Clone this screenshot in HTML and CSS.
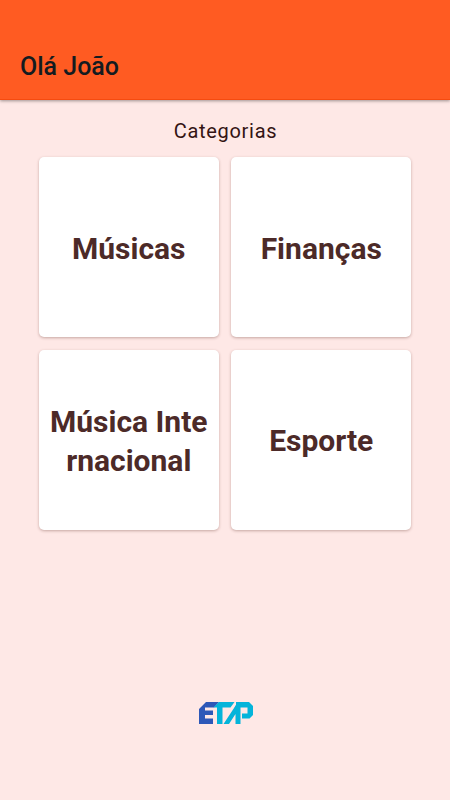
FILE: index.html
```html
<!DOCTYPE html>
<html lang="pt-BR">
<head>
<meta charset="utf-8">
<title>Categorias</title>
<link rel="stylesheet" href="styles.css">
</head>
<body>
<header class="app-bar"><h1 class="greeting">Olá João</h1></header>
<main class="content">
<h2 class="section-title">Categorias</h2>
<div class="grid">
<button class="card">Músicas</button>
<button class="card">Finanças</button>
<button class="card">Música Inte<br>rnacional</button>
<button class="card">Esporte</button>
</div>
</main>
<footer class="footer">
<svg class="logo" viewBox="0 0 54 22" role="img" aria-label="ETAP">
<path fill="#2d58b8" d="M0 7L7 0H20L15 5.500H6V8.500H14V13H6V16.500H14V22H0Z"/>
<path fill="#04b4da" d="M20 0H35.500L31.500 5.500H23.500V22H18V5.500H14.500Z"/>
<path fill="#04b4da" d="M24.500 22L37 3V0H41.500V22H36.500V12L30 22Z"/>
<path fill="#04b4da" d="M39 0H50L54 4V13L50.500 16.500H43V11.500H48.500V5.500H35.500Z"/>
</svg>
</footer>
</body>
</html>
```

FILE: styles.css
```css
* { box-sizing: border-box; }
body {
  margin: 0;
  height: 800px;
  display: flex;
  flex-direction: column;
  background: #fee8e6;
  font-family: Roboto, sans-serif;
  overflow: hidden;
}
.app-bar {
  height: 100px;
  flex: none;
  padding: 52px 20px 0;
  background: #ff5b22;
  border-bottom: 1px solid #f54b10;
  box-shadow: 0 1px 3px rgba(0, 0, 0, .38);
}
.greeting {
  margin: 0;
  font-size: 25px;
  line-height: 30px;
  font-weight: 500;
  color: #141b20;
}
.content { padding-top: 19px; }
.section-title {
  margin: 0 0 14.400px;
  padding-left: 1px;
  text-align: center;
  font-size: 20px;
  line-height: 24px;
  font-weight: 400;
  letter-spacing: .7px;
  color: #341414;
}
.grid {
  display: grid;
  grid-template-columns: 180px 180px;
  grid-auto-rows: 180px;
  gap: 12.500px;
  justify-content: center;
}
.card {
  padding: 2px 0 0;
  border: 0;
  border-radius: 5px;
  background: #fff;
  box-shadow: 0 1px 3px rgba(80, 30, 20, .32);
  font: 700 30px/39px Roboto, sans-serif;
  color: #4c2a28;
}
.footer {
  margin-top: auto;
  padding-bottom: 76px;
  display: flex;
  justify-content: center;
}
.logo { display: block; width: 54px; height: 22px; margin-left: 2px; }
```
